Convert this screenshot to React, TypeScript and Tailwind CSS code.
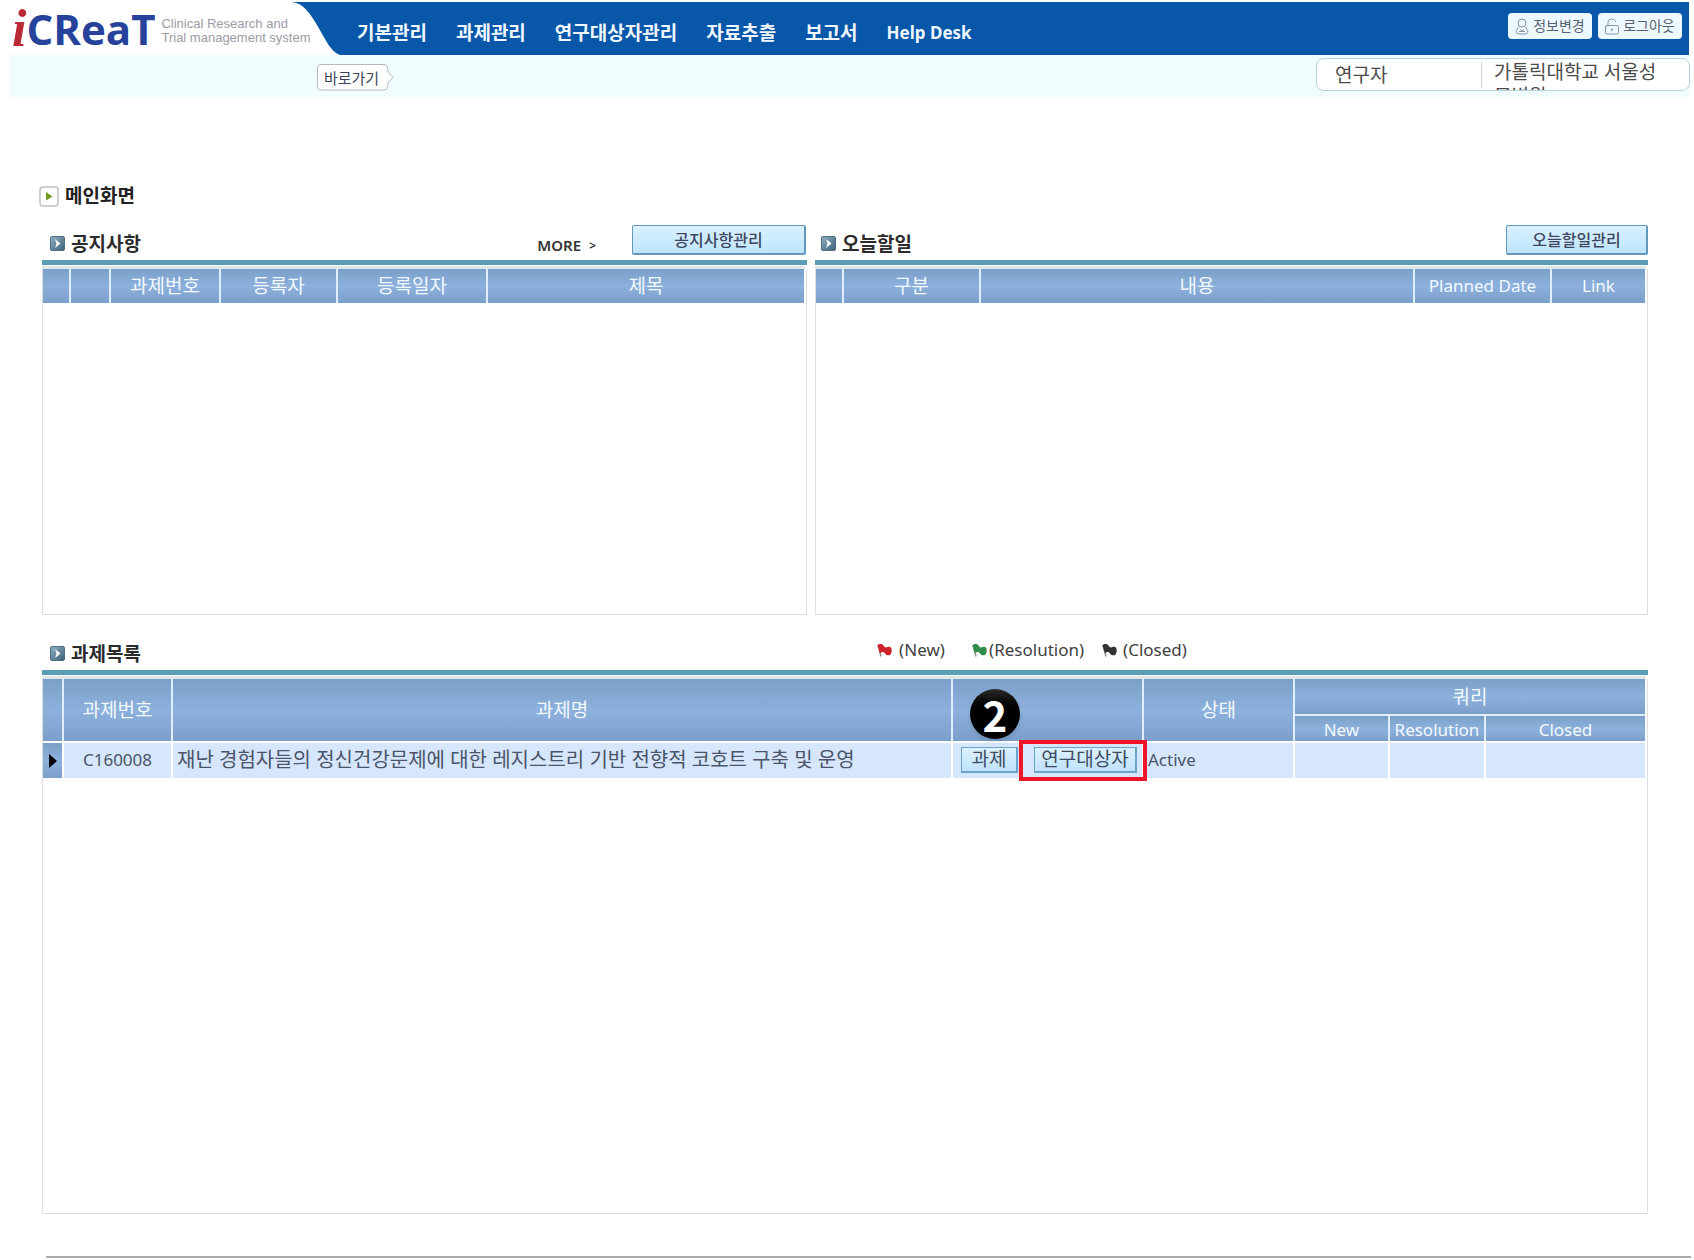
import type { ReactNode } from "react";
import clsx from "clsx";

const menus = ["기본관리", "과제관리", "연구대상자관리", "자료추출", "보고서", "Help Desk"];

const projects = [
  {
    id: "C160008",
    name: "재난 경험자들의 정신건강문제에 대한 레지스트리 기반 전향적 코호트 구축 및 운영",
    status: "Active",
  },
];

const headCell =
  "border-l-2 border-[#dfeefa] bg-linear-to-b from-[#7a9fc8] via-[#8db1dc] to-[#7b9fca] p-0 text-center font-normal text-[#f2f9ff] first:border-l-0";
const bodyCell = "h-[37px] border-t-2 border-l-2 border-white bg-[#d5e6fd] p-0 pb-[2px] text-[#4b5468]";

function UserIcon() {
  return (
    <svg viewBox="0 0 14 17" className="h-[17px] w-[14px]" fill="none" stroke="#8c93a8" aria-hidden="true">
      <circle cx="7" cy="5" r="4" />
      <path d="M4.5 8.5 C2.5 10 1 12 1 14.500 L3 16 H11 L13 14.500 C13 12 11.500 10 9.500 8.500" />
      <path d="M4 13.500 H10 M5 11.500 L7 13 L9 11.500" />
    </svg>
  );
}

function LockIcon() {
  return (
    <svg viewBox="0 0 14 17" className="h-[17px] w-[14px]" fill="none" stroke="#8c93a8" aria-hidden="true">
      <rect x="0.5" y="7.500" width="13" height="8.500" rx="1.500" />
      <path d="M3 7.500 V4.500 C3 2 4.500 1 6.500 1 C8.500 1 10 2 10.500 4" />
      <path d="M7 10.500 V13" strokeWidth="1.500" />
    </svg>
  );
}

function SectionIcon() {
  return (
    <svg viewBox="0 0 15 15" className="size-[15px]" aria-hidden="true">
      <defs>
        <linearGradient id="section-icon" x1="0" y1="0" x2="1" y2="1">
          <stop offset="0" stopColor="#8fb0c4" />
          <stop offset="1" stopColor="#3d6178" />
        </linearGradient>
      </defs>
      <rect x="0.5" y="0.5" width="14" height="14" rx="1.500" fill="url(#section-icon)" stroke="#4c6f86" />
      <path d="M5 3 L10.500 7.500 L5 12 L6.500 7.500 Z" fill="#fff" />
    </svg>
  );
}

function Flag({ color }: { color: string }) {
  return (
    <svg viewBox="0 0 15 15" className="h-[15px] w-[15px]" aria-hidden="true">
      <path d="M1 2 L4 13.500" stroke="#9a8f8f" strokeWidth="1.500" />
      <path
        d="M0.500 2.500 C2 0.500 5 0.800 6.500 2.500 C7.500 4.500 9 5 10.500 4 C12 3.300 14 4 14.500 5.500 C15 8 14.500 10 13.500 11.500 C11.500 13 9.500 12.500 8 10.500 C7 8.500 4.500 8.500 3 10.500 Z"
        fill={color}
      />
    </svg>
  );
}

function SectionHead({ title, children, className }: { title: string; children?: ReactNode; className?: string }) {
  return (
    <div className={clsx("h-[35px]", className ?? "flex justify-between")}>
      <h2 className="flex items-center gap-[6px] pt-[2px] pl-[8px] text-[19px] leading-6 font-bold text-[#2b2b2b]">
        <SectionIcon />
        {title}
      </h2>
      {children}
    </div>
  );
}

function ManageButton({ label, className }: { label: string; className: string }) {
  return (
    <button
      type="button"
      className={clsx(
        "h-[30px] rounded-xs border border-r-2 border-b-2 border-[#6597bb] bg-linear-to-b from-[#d9f1ff] to-[#bfe5fd] text-base leading-6 font-medium text-[#3f4560]",
        className
      )}
    >
      {label}
    </button>
  );
}

function RowButton({ label, className }: { label: string; className: string }) {
  return (
    <button
      type="button"
      className={clsx(
        "block h-[26px] border border-r-2 border-b-2 border-[#6ba3c9] bg-linear-to-b from-[#dcf1ff] to-[#bfe2fb] text-[19px] leading-5 text-[#3f4b62]",
        className
      )}
    >
      {label}
    </button>
  );
}

// teal rule + pale strip above every grid
function GridFrame({ children, className }: { children: ReactNode; className: string }) {
  return (
    <>
      <div className="h-[5px] bg-[#5b9cb6]" />
      <div className="mr-[2px] h-1 border-t border-white bg-[#dde8ea]" />
      <div className={clsx("border-x border-b border-[#dedee2] pr-[2px]", className)}>{children}</div>
    </>
  );
}

function SimpleGrid({ columns }: { columns: { label: string; width: string }[] }) {
  return (
    <table className="w-full table-fixed border-separate border-spacing-0">
      <thead>
        <tr>
          {columns.map((c, i) => (
            <th
              key={i}
              scope="col"
              className={clsx(headCell, "h-[34px] leading-6", c.width, /^[A-Z]/.test(c.label) ? "text-[17px]" : "text-[19px]")}
            >
              {c.label}
            </th>
          ))}
        </tr>
      </thead>
    </table>
  );
}

export default function App() {
  return (
    <div className="min-h-screen bg-white font-['Noto_Sans','Noto_Sans_CJK_KR',sans-serif]">
      <header className="pt-[2px] pr-[5px] pl-[9px]">
        <div className="flex h-[53px] bg-[#0857a9]">
          <a href="#" className="relative z-10 flex w-[283px] shrink-0 items-center bg-white pl-[3px] whitespace-nowrap">
            <span className="w-[19px] font-['Liberation_Serif',serif] text-[52px] leading-[48px] font-bold text-[#b92a36] italic">i</span>
            <span className="font-['Open_Sans',sans-serif] text-[42px] leading-[48px] font-bold text-[#27429a]">CReaT</span>
            <span className="ml-[6px] pt-1 font-['Liberation_Sans',sans-serif] text-[13px] leading-[14px] text-[#9b9ca6]">
              Clinical Research and
              <br />
              Trial management system
            </span>
          </a>
          <svg viewBox="0 0 50 53" className="h-[53px] w-[50px] shrink-0" aria-hidden="true">
            <path d="M0 0 C12 2 17 10 25 23 C34 38 38 49 48 53 H0 Z" fill="#fff" />
          </svg>
          <nav className="ml-[15px] flex items-center gap-[29px] pt-2 text-[19px] leading-6 font-bold whitespace-nowrap text-[#eef6ff]">
            {menus.map((m) => (
              <a key={m} href="#" className={m === "Help Desk" ? "text-[17px]" : undefined}>
                {m}
              </a>
            ))}
          </nav>
          <div className="ml-auto flex gap-[6px] pt-[11px] pr-[7px] text-sm whitespace-nowrap text-[#5a6070]">
            <button type="button" className="flex h-[26px] w-[84px] items-center justify-center gap-1 rounded-sm bg-[#ecfaff]">
              <UserIcon />
              정보변경
            </button>
            <button type="button" className="flex h-[26px] w-[84px] items-center justify-center gap-1 rounded-sm bg-[#ecfaff]">
              <LockIcon />
              로그아웃
            </button>
          </div>
        </div>
        <div className="flex h-[42px] justify-between bg-[#f0fcff] pt-[3px]">
          <button type="button" className="relative mt-[6px] ml-[308px] h-[27px] w-[77px] pr-2 text-[15px] leading-6 text-[#3b4658]">
            <svg viewBox="0 0 77 27" className="absolute inset-0 h-[27px] w-[77px]" aria-hidden="true">
              <path
                d="M4 0.500 H67 Q70 0.500 70.500 3 L71 8 L76 13.500 L71 19 L70.500 23 Q70 26 67 26 H4 Q0.500 26 0.500 22.500 V4 Q0.500 0.500 4 0.500 Z"
                fill="#fff"
                stroke="#b3b9c0"
              />
            </svg>
            <span className="relative">바로가기</span>
          </button>
          <div className="-mr-px flex h-[33px] w-[374px] overflow-hidden rounded-lg border border-[#b5d2e0] bg-white text-[19px] leading-6 text-[#4a4a4a]">
            <div className="my-[2px] w-[165px] border-r border-[#c8d8e2] pt-[2px] pl-[18px]">연구자</div>
            <div className="flex-1 pt-px pr-4 pl-[12px]">가톨릭대학교 서울성모병원</div>
          </div>
        </div>
      </header>

      <main className="pt-[85px] pr-[46px] pl-[42px]">
        <h1 className="-ml-[3px] flex h-[27px] items-center gap-[6px] pt-px text-[19px] leading-6 font-bold text-[#222]">
          <svg viewBox="0 0 20 21" className="h-[21px] w-[20px]" aria-hidden="true">
            <rect x="1" y="1" width="18" height="19" rx="3" fill="#fff" stroke="#c4bfc4" strokeWidth="1.500" />
            <path d="M7 6 L13.500 10.500 L7 14.500 Z" fill="#6f9a1e" />
          </svg>
          메인화면
        </h1>

        <div className="mt-4 grid grid-cols-[765fr_833fr] gap-2">
          <section>
            <SectionHead title="공지사항">
              <div className="flex gap-9 pr-px">
                <a href="#" className="flex items-center gap-2 pt-[6px] text-[15px] font-semibold text-[#333]">
                  MORE <span className="text-xs">&gt;</span>
                </a>
                <ManageButton label="공지사항관리" className="w-[174px]" />
              </div>
            </SectionHead>
            <GridFrame className="min-h-[346px]">
              <SimpleGrid
                columns={[
                  { label: "", width: "w-[26px]" },
                  { label: "", width: "w-[40px]" },
                  { label: "과제번호", width: "w-[110px]" },
                  { label: "등록자", width: "w-[117px]" },
                  { label: "등록일자", width: "w-[150px]" },
                  { label: "제목", width: "w-auto" },
                ]}
              />
            </GridFrame>
          </section>

          <section>
            <SectionHead title="오늘할일" className="-ml-[2px] flex justify-between">
              <ManageButton label="오늘할일관리" className="w-[142px]" />
            </SectionHead>
            <GridFrame className="min-h-[346px]">
              <SimpleGrid
                columns={[
                  { label: "", width: "w-[26px]" },
                  { label: "구분", width: "w-[137px]" },
                  { label: "내용", width: "w-auto" },
                  { label: "Planned Date", width: "w-[137px]" },
                  { label: "Link", width: "w-[95px]" },
                ]}
              />
            </GridFrame>
          </section>
        </div>

        <section className="mt-5">
          <SectionHead title="과제목록" className="grid grid-cols-[52%_1fr]">
            <div className="flex h-[30px] items-center text-[17px] leading-6 text-[#3f3f3f]">
              <span className="flex w-[95px] items-center gap-[7px]">
                <Flag color="#d0202c" />
                (New)
              </span>
              <span className="flex w-[130px] items-center gap-[2px]">
                <Flag color="#2f8f4a" />
                (Resolution)
              </span>
              <span className="flex items-center gap-[6px]">
                <Flag color="#333333" />
                (Closed)
              </span>
            </div>
          </SectionHead>
          <GridFrame className="min-h-[535px]">
            <table className="w-full table-fixed border-separate border-spacing-0">
              <colgroup>
                <col className="w-[19px]" />
                <col className="w-[109px]" />
                <col />
                <col className="w-[191px]" />
                <col className="w-[151px]" />
                <col className="w-[95px]" />
                <col className="w-[96px]" />
                <col className="w-[161px]" />
              </colgroup>
              <thead className="text-[19px] leading-6">
                <tr>
                  <th rowSpan={2} className={headCell} />
                  <th rowSpan={2} scope="col" className={headCell}>과제번호</th>
                  <th rowSpan={2} scope="col" className={headCell}>과제명</th>
                  <th rowSpan={2} className={headCell} />
                  <th rowSpan={2} scope="col" className={headCell}>상태</th>
                  <th colSpan={3} scope="colgroup" className={clsx(headCell, "h-[37px] border-b-2")}>쿼리</th>
                </tr>
                <tr className="text-[17px] leading-5">
                  <th scope="col" className={clsx(headCell, "h-[25px] pt-[3px] first:border-l-2")}>New</th>
                  <th scope="col" className={clsx(headCell, "pt-[3px]")}>Resolution</th>
                  <th scope="col" className={clsx(headCell, "pt-[3px]")}>Closed</th>
                </tr>
              </thead>
              <tbody>
                {projects.map((p) => (
                  <tr key={p.id}>
                    <td className="border-t-2 border-white bg-linear-to-b from-[#7a9fc8] via-[#8db1dc] to-[#7b9fca] p-0">
                      <svg viewBox="0 0 8 14" className="mx-auto h-[14px] w-2" aria-hidden="true">
                        <path d="M0 0 L8 7 L0 14 Z" fill="#000" />
                      </svg>
                    </td>
                    <td className={clsx(bodyCell, "text-center text-[17px]")}>{p.id}</td>
                    <td className={clsx(bodyCell, "truncate pl-1 text-xl leading-6")}>{p.name}</td>
                    <td className={bodyCell}>
                      <div className="flex gap-4 pl-[8px]">
                        <div className="relative">
                          <RowButton label="과제" className="w-[57px]" />
                          <span className="absolute -top-[58px] left-[9px] flex size-[50px] items-center justify-center rounded-full bg-linear-to-b from-[#2b2b2b] via-black to-black font-['Noto_Sans_CJK_KR',sans-serif] text-[42px] leading-none font-bold text-white shadow-md">
                            2
                          </span>
                        </div>
                        <div className="relative">
                          <RowButton label="연구대상자" className="w-[103px]" />
                          <span className="pointer-events-none absolute -top-[7px] -right-[10px] -bottom-[8px] -left-[15px] border-4 border-[#f01428]" />
                        </div>
                      </div>
                    </td>
                    <td className={clsx(bodyCell, "pl-1 text-[17px]")}>{p.status}</td>
                    <td className={bodyCell} />
                    <td className={bodyCell} />
                    <td className={bodyCell} />
                  </tr>
                ))}
              </tbody>
            </table>
          </GridFrame>
        </section>
      </main>

      <footer className="mt-[42px] mr-[3px] ml-[46px] border-t-2 border-[#a9abad]" />
    </div>
  );
}
